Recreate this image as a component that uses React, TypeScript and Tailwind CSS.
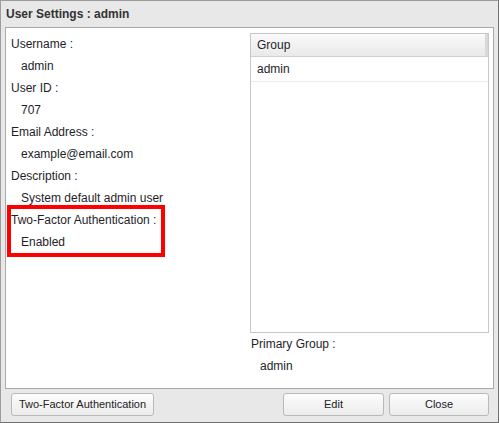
import React from "react";

const fields = [
  { label: "Username :", value: "admin" },
  { label: "User ID :", value: "707" },
  { label: "Email Address :", value: "example@email.com" },
  { label: "Description :", value: "System default admin user" },
  { label: "Two-Factor Authentication :", value: "Enabled" },
];

const groups = ["admin"];

const Button = ({ children, className }: { children: React.ReactNode; className?: string }) => (
  <button
    className={`h-[23px] rounded-[3px] border border-[#b9b9b9] bg-gradient-to-b from-[#fdfdfd] to-[#ececec] text-[11px] text-[#222] ${className ?? ""}`}
  >
    {children}
  </button>
);

const App = () => {
  return (
    <div
      className="w-[499px] h-[423px] bg-[#e8e8e8] border border-[#9c9c9c] border-r-[#707070] border-b-[#707070] flex flex-col text-[#1e1e2a]"
      style={{ fontFamily: '"Liberation Sans", Arial, sans-serif' }}
    >
      <div className="h-[26px] pl-[5px] flex items-center font-bold text-[12px] text-[#333]">
        User Settings : admin
      </div>

      <div className="ml-[4px] mr-[4px] h-[362px] bg-white border border-[#a9a9a9] relative flex text-[12px]">
        <div className="w-[238px] pl-[5px] pt-[5px]">
          {fields.map((f) => (
            <div key={f.label}>
              <div className="h-[22px] leading-[22px]">{f.label}</div>
              <div className="h-[22px] leading-[22px] pl-[10px]">{f.value}</div>
            </div>
          ))}
        </div>

        {/* highlight box */}
        <div className="absolute left-[1px] top-[177px] w-[158px] h-[52px] border-4 border-[#ff0000]" />

        <div className="flex flex-col pt-[5px] ml-[6px]">
          <div className="w-[239px] h-[300px] border border-[#c8c8c8] flex flex-col">
            <div className="h-[23px] pl-[6px] flex items-center bg-gradient-to-b from-[#fafafa] to-[#e9e9e9] border-b border-[#cfcfcf] border-r-[3px] border-r-[#d8d8d8]">
              Group
            </div>
            {groups.map((g) => (
              <div key={g} className="h-[25px] pl-[6px] flex items-center border-b border-[#ececec]">
                {g}
              </div>
            ))}
          </div>
          <div className="h-[22px] leading-[22px] pl-[1px]">Primary Group :</div>
          <div className="h-[22px] leading-[22px] pl-[10px]">admin</div>
        </div>
      </div>

      <div className="flex items-center pt-[4px] pl-[10px]">
        <Button className="w-[143px]">Two-Factor Authentication</Button>
        <Button className="w-[101px] ml-[129px]">Edit</Button>
        <Button className="w-[100px] ml-[5px]">Close</Button>
      </div>
    </div>
  );
};

export default App;
